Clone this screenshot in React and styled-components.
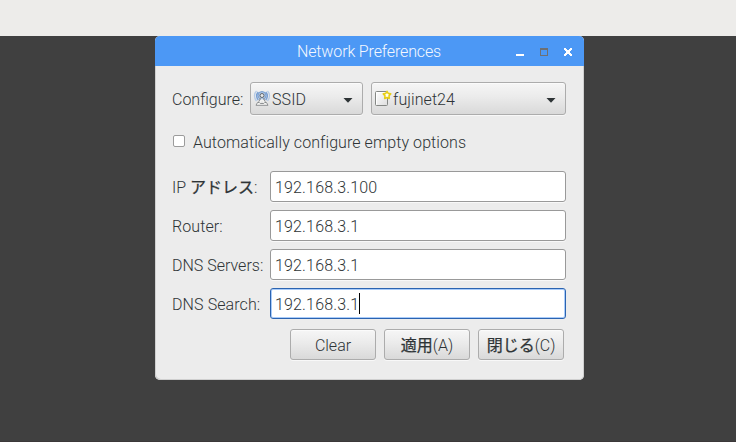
import React from 'react';
import styled, { createGlobalStyle } from 'styled-components';

const GlobalStyle = createGlobalStyle`
  * { box-sizing: border-box; }
  body { margin: 0; background: #404040; }
`;

const Desktop = styled.div`
  height: 442px;
  overflow: hidden;
  background: #404040;
  border-bottom: 1px solid #3c3839;
  font: 300 16px/20px Roboto, "Noto Sans CJK JP", sans-serif;
  color: #2e3436;
`;

const Panel = styled.div`
  height: 36px;
  background: #edecea;
`;

const Window = styled.main`
  width: 429px;
  height: 344px;
  margin-left: 155px;
  border-radius: 5px;
  overflow: hidden;
  background: #ececec;
  box-shadow: inset 1px -1px 0 #cfcfcf, inset -1px 0 0 #cfcfcf;
`;

const TitleBar = styled.header`
  display: flex;
  align-items: center;
  height: 30px;
  padding: 2px 12px 0 142px;
  background: #4c98f5;
  color: #f4f8ff;
`;

const Title = styled.h1`
  flex: 1;
  margin: 0;
  font: inherit;
  letter-spacing: -0.14px;
  white-space: nowrap;
`;

const WindowControls = styled.div`
  display: flex;
  gap: 16px;
`;

const ControlIcon = styled.svg`
  display: block;
  width: 8px;
  height: 8px;
  shape-rendering: crispEdges;
`;

const Content = styled.form`
  padding: 16px 18px 0 17px;
`;

const ConfigureRow = styled.div`
  display: flex;
  align-items: center;
  height: 33px;
`;

const Label = styled.label`
  width: ${(p) => p.$width}px;
  padding-top: 2px;
  flex: none;
  letter-spacing: ${(p) => p.$tracking || 0}px;
  white-space: nowrap;
`;

const Japanese = styled.span`
  font-weight: 400;
  -webkit-text-stroke: 0.25px currentColor;
`;

const raised = `
  border: 1px solid #acacac;
  border-radius: 3px;
  background: linear-gradient(#f6f6f6, #ebebeb 45%, #d9d9d9);
  box-shadow: inset 0 1px 0 #fbfbfb, 0 1px 0 #f8f8f8;
  color: inherit;
  font: inherit;
`;

const Combo = styled.button`
  ${raised}
  display: flex;
  align-items: center;
  width: ${(p) => p.$width}px;
  height: 33px;
  margin: 0 ${(p) => p.$gap || 0}px 0 0;
  padding: 0 9px 0 3px;
  text-align: left;
`;

const ComboText = styled.span`
  flex: 1;
  padding: 2px 0 0 2px;
  letter-spacing: 0.08px;
`;

const ComboIcon = styled.svg`
  display: block;
  width: 16px;
  height: 16px;
  margin-bottom: 2px;
  overflow: visible;
`;

const Arrow = styled.svg`
  display: block;
  width: 10px;
  height: 5px;
  margin-top: 3px;
`;

const CheckRow = styled.label`
  display: flex;
  align-items: center;
  gap: 8px;
  height: 20px;
  margin: 18px 0 18px 1px;
  letter-spacing: 0.08px;
`;

const CheckBox = styled.span`
  width: 12px;
  height: 12px;
  margin-bottom: 4px;
  border: 1px solid #9b9b9b;
  border-radius: 2px;
  background: #fff;
`;

const Fields = styled.div`
  display: grid;
  gap: 8px;
`;

const Field = styled.div`
  display: flex;
  align-items: center;
  height: 31px;
`;

const Entry = styled.div`
  display: flex;
  align-items: center;
  flex: 1;
  height: 31px;
  padding: 2px 4px 0;
  border: 1px solid ${(p) => (p.$focused ? '#2b63b0' : '#999')};
  border-radius: 3px;
  background: #fff;
  box-shadow: ${(p) => (p.$focused ? 'inset 0 0 0 1px #a9ccfa' : '0 1px 0 #f8f8f8')};
  letter-spacing: 0.16px;
`;

const Caret = styled.span`
  width: 1px;
  height: 21px;
  margin-top: -3px;
  background: #000;
`;

const Actions = styled.div`
  display: flex;
  justify-content: flex-end;
  gap: 8px;
  margin: 10px 2px 0 0;
`;

const ActionButton = styled.button`
  ${raised}
  width: 86px;
  height: 31px;
  padding: 2px 0 0;
  white-space: nowrap;
`;

const DropArrow = () => (
  <Arrow viewBox="0 0 10 5"><path d="M.5 0H9.5L5 4.7Z" fill="#2e3436" /></Arrow>
);

const AntennaIcon = () => (
  <ComboIcon viewBox="0 0 16 16" fill="none">
    <path d="M2.5 1C-.2 3.5-.2 8 2.5 11M13.5 1c2.7 2.5 2.7 7 0 10" stroke="#b5cae6" strokeWidth="1.3" />
    <path d="M4.3 2C2.2 4.2 2.2 7.800 4.300 10M11.700 2c2.100 2.200 2.100 5.800 0 8" stroke="#79a0d4" strokeWidth="1.6" />
    <circle cx="8" cy="5.5" r="4" fill="#a9c4e8" stroke="#7c9fcd" />
    <path d="M6.5 8 4.5 13M9.5 8l2 5" stroke="#93979a" strokeWidth="1.2" />
    <path d="M2 15.3l1.5-2.800h1.800l1 1h3.400l1-1h1.800l1.500 2.800Z" fill="#f4f4f2" stroke="#85888a" strokeWidth=".9" />
    <path d="M5.7 12.3 8 9.5l2.3 2.8" stroke="#f4f4f2" strokeWidth="1.4" />
    <circle cx="8" cy="5.5" r="2" fill="#e7e9eb" stroke="#62676c" />
  </ComboIcon>
);

const NewProfileIcon = () => (
  <ComboIcon viewBox="0 0 16 16">
    <defs>
      <linearGradient id="paper" x1="0" y1="0" x2="1" y2="1">
        <stop offset="0" stopColor="#fff" />
        <stop offset="1" stopColor="#dedede" />
      </linearGradient>
    </defs>
    <rect x=".5" y="1.5" width="12" height="14" rx="1" fill="url(#paper)" stroke="#858885" />
    <path d="M1.5 14.5v-12h10" fill="none" stroke="#fff" />
    <path d="M12 1.3l1.2 2.1 2.5.5-1.7 1.900.3 2.600-2.300-1-2.300 1 .3-2.600-1.700-1.900 2.500-.5Z" fill="#fffef0" stroke="#e8cf18" strokeWidth="1.6" strokeLinejoin="round" />
  </ComboIcon>
);

const fields = [
  { id: 'ip', label: <>IP <Japanese>アドレス</Japanese>:</>, value: '192.168.3.100' },
  { id: 'router', label: 'Router:', value: '192.168.3.1', tracking: 0.08 },
  { id: 'servers', label: 'DNS Servers:', value: '192.168.3.1' },
  { id: 'search', label: 'DNS Search:', value: '192.168.3.1', focused: true, tracking: 0.1 },
];

export default function App() {
  return (
    <Desktop>
      <GlobalStyle />
      <Panel />
      <Window>
        <TitleBar>
          <Title>Network Preferences</Title>
          <WindowControls>
            <ControlIcon viewBox="0 0 8 8"><path d="M0 6h8v2H0Z" fill="#fff" /></ControlIcon>
            <ControlIcon viewBox="0 0 8 8"><path d="M0 0h8v8H0ZM1 2v5h6V2Z" fill="#6d7074" fillRule="evenodd" /></ControlIcon>
            <ControlIcon viewBox="0 0 8 8"><path d="M0 0h2v1h1v1h2V1h1V0h2v2H7v1H6v2h1v1h1v2H6V7H5V6H3v1H2v1H0V6h1V5h1V3H1V2H0Z" fill="#fff" /></ControlIcon>
          </WindowControls>
        </TitleBar>
        <Content>
          <ConfigureRow>
            <Label $width={78}>Configure:</Label>
            <Combo type="button" $width={113} $gap={8}>
              <AntennaIcon /><ComboText>SSID</ComboText><DropArrow />
            </Combo>
            <Combo type="button" $width={195}>
              <NewProfileIcon /><ComboText>fujinet24</ComboText><DropArrow />
            </Combo>
          </ConfigureRow>
          <CheckRow><CheckBox />Automatically configure empty options</CheckRow>
          <Fields>
            {fields.map(({ id, label, value, focused, tracking }) => (
              <Field key={id}>
                <Label $width={98} $tracking={tracking}>{label}</Label>
                <Entry $focused={focused}>{value}{focused && <Caret />}</Entry>
              </Field>
            ))}
          </Fields>
          <Actions>
            <ActionButton type="button">Clear</ActionButton>
            <ActionButton type="button"><Japanese>適用</Japanese>(A)</ActionButton>
            <ActionButton type="button"><Japanese>閉じる</Japanese>(C)</ActionButton>
          </Actions>
        </Content>
      </Window>
    </Desktop>
  );
}
